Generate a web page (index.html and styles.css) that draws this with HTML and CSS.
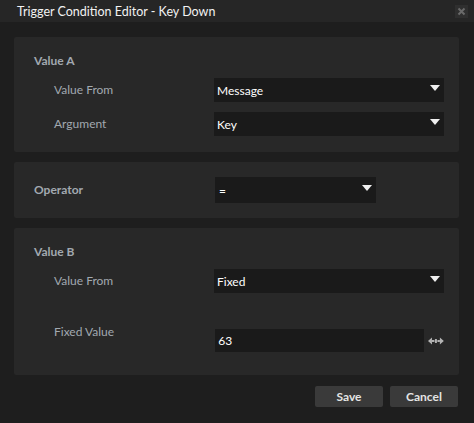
FILE: index.html
```html
<!doctype html>
<html lang="en">
  <head>
    <meta charset="UTF-8" />
    <title>Trigger Condition Editor - Key Down</title>
    <link rel="stylesheet" href="styles.css">
  </head>
  <body>
    <div class="window">
      <div class="titlebar">
        <span class="title">Trigger Condition Editor - Key Down</span>
        <span class="close">
          <svg width="13" height="13" viewBox="0 0 13 13">
            <path d="M3.5 3.5 L9.5 9.5 M9.5 3.5 L3.5 9.5" stroke="#6a6a6a" stroke-width="2"/>
          </svg>
        </span>
      </div>

      <div class="content">
        <!-- Value A -->
        <div class="panel">
          <div class="heading">Value A</div>
          <div class="field">
            <span class="label">Value From</span>
            <div class="select wide"><span>Message</span><i class="arrow"></i></div>
          </div>
          <div class="field">
            <span class="label">Argument</span>
            <div class="select wide"><span>Key</span><i class="arrow"></i></div>
          </div>
        </div>

        <!-- Operator -->
        <div class="panel op-panel">
          <span class="heading op-label">Operator</span>
          <div class="select narrow"><span>=</span><i class="arrow"></i></div>
        </div>

        <!-- Value B -->
        <div class="panel panel-b">
          <div class="heading">Value B</div>
          <div class="field">
            <span class="label">Value From</span>
            <div class="select wide"><span>Fixed</span><i class="arrow"></i></div>
          </div>
          <div class="field fixed-row">
            <span class="label">Fixed Value</span>
            <div class="input">63</div>
            <svg class="drag" width="16" height="8" viewBox="0 0 16 8">
              <path d="M0 4 L4 0.5 L4 7.5 Z M16 4 L12 0.5 L12 7.5 Z" fill="#b4b4b4"/>
              <rect x="4" y="3" width="2.5" height="2" fill="#b4b4b4"/>
              <rect x="9.5" y="3" width="2.5" height="2" fill="#b4b4b4"/>
              <rect x="7" y="2" width="2" height="4" fill="#b4b4b4"/>
            </svg>
          </div>
        </div>

        <div class="buttons">
          <button>Save</button>
          <button>Cancel</button>
        </div>
      </div>
    </div>
  </body>
</html>
```

FILE: styles.css
```css
body {
  margin: 0;
  background-color: #1e1e1e;
  font-family: Lato, "Liberation Sans", sans-serif;
  font-size: 12px;
  color: #e8e8e8;
}
.window {
  width: 474px;
  height: 423px;
}
.titlebar {
  height: 22px;
  background-color: #262626;
  display: flex;
  align-items: center;
  justify-content: space-between;
  padding: 0 6px 0 17px;
}
.title {
  color: #f2f2f2;
  font-size: 12.5px;
}
.close {
  width: 13px;
  height: 13px;
  background-color: #2f2f2f;
  display: flex;
}
.content {
  padding: 15px 15px 0 14px;
  display: flex;
  flex-direction: column;
  gap: 10px;
}
.panel {
  background-color: #282828;
  border-radius: 2px;
  padding: 16px 15px 16px 20px;
}
.heading {
  color: #a2a9b0;
  font-weight: bold;
  line-height: 16px;
  margin-bottom: 9px;
}
.field {
  display: flex;
  align-items: center;
  margin-bottom: 10px;
}
.field:last-child {
  margin-bottom: 0;
}
.label {
  color: #a2a9b0;
  width: 160px;
  margin-left: 20px;
  line-height: 16px;
}
.select {
  background-color: #1a1a1a;
  height: 24px;
  display: flex;
  align-items: center;
  justify-content: space-between;
  padding: 0 4px 0 3px;
  box-sizing: border-box;
  color: #ffffff;
}
.select.wide {
  width: 230px;
}
.select.narrow {
  width: 161px;
  height: 26px;
  padding-left: 4px;
}
.arrow {
  width: 0;
  height: 0;
  border-left: 5px solid transparent;
  border-right: 5px solid transparent;
  border-top: 6px solid #f0f0f0;
  margin-top: -4px;
}
.op-panel {
  display: flex;
  align-items: center;
  padding: 15px 15px 15px 20px;
}
.op-label {
  width: 181px;
  margin-bottom: 0;
}
.panel-b {
  padding-bottom: 23px;
}
.fixed-row {
  align-items: flex-start;
  margin-top: 31px;
}
.fixed-row .label {
  width: 163px;
}
.input {
  margin-top: 5px;
  width: 211px;
  height: 23px;
  background-color: #1a1a1a;
  color: #ffffff;
  line-height: 23px;
  padding-left: 3px;
  box-sizing: border-box;
}
.drag {
  margin: 13px 0 0 4px;
}
.buttons {
  display: flex;
  justify-content: flex-end;
  gap: 7px;
  margin-top: 1px;
  padding-right: 1px;
}
button {
  width: 68px;
  height: 21px;
  background-color: #3a3a3a;
  border: none;
  border-radius: 2px;
  color: #e4e4e4;
  font-family: Lato, "Liberation Sans", sans-serif;
  font-size: 12px;
  font-weight: bold;
  padding: 0;
}
```
